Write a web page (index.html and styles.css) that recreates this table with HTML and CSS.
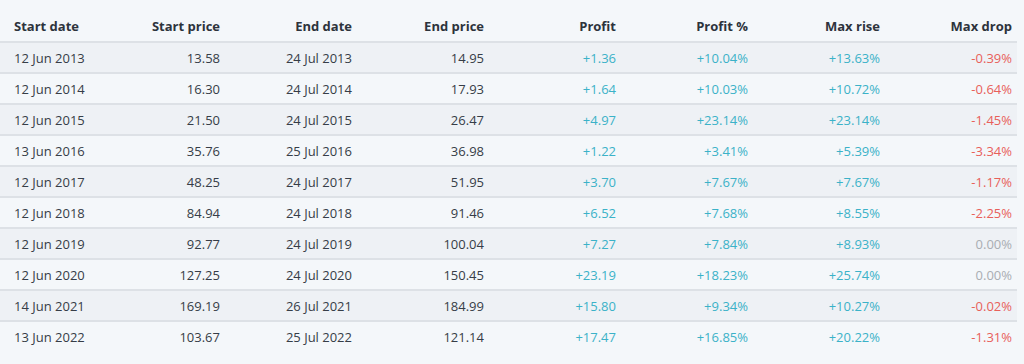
FILE: index.html
```html
<!DOCTYPE html>
<html lang="en">
<head>
  <meta charset="UTF-8">
  <title>Seasonality results</title>
  <link rel="stylesheet" href="styles.css">
</head>
<body>
<div class="results-wrap">
  <table class="results-table">
    <colgroup>
      <col class="col-first">
      <col span="7" class="col-rest">
    </colgroup>
    <thead>
      <tr>
        <th class="left">Start date</th>
        <th>Start price</th>
        <th>End date</th>
        <th>End price</th>
        <th>Profit</th>
        <th>Profit %</th>
        <th>Max rise</th>
        <th>Max drop</th>
      </tr>
    </thead>
    <tbody>
      <tr><td class="left">12 Jun 2013</td><td>13.58</td><td>24 Jul 2013</td><td>14.95</td><td class="up">+1.36</td><td class="up">+10.04%</td><td class="up">+13.63%</td><td class="down">-0.39%</td></tr>
      <tr><td class="left">12 Jun 2014</td><td>16.30</td><td>24 Jul 2014</td><td>17.93</td><td class="up">+1.64</td><td class="up">+10.03%</td><td class="up">+10.72%</td><td class="down">-0.64%</td></tr>
      <tr><td class="left">12 Jun 2015</td><td>21.50</td><td>24 Jul 2015</td><td>26.47</td><td class="up">+4.97</td><td class="up">+23.14%</td><td class="up">+23.14%</td><td class="down">-1.45%</td></tr>
      <tr><td class="left">13 Jun 2016</td><td>35.76</td><td>25 Jul 2016</td><td>36.98</td><td class="up">+1.22</td><td class="up">+3.41%</td><td class="up">+5.39%</td><td class="down">-3.34%</td></tr>
      <tr><td class="left">12 Jun 2017</td><td>48.25</td><td>24 Jul 2017</td><td>51.95</td><td class="up">+3.70</td><td class="up">+7.67%</td><td class="up">+7.67%</td><td class="down">-1.17%</td></tr>
      <tr><td class="left">12 Jun 2018</td><td>84.94</td><td>24 Jul 2018</td><td>91.46</td><td class="up">+6.52</td><td class="up">+7.68%</td><td class="up">+8.55%</td><td class="down">-2.25%</td></tr>
      <tr><td class="left">12 Jun 2019</td><td>92.77</td><td>24 Jul 2019</td><td>100.04</td><td class="up">+7.27</td><td class="up">+7.84%</td><td class="up">+8.93%</td><td class="flat">0.00%</td></tr>
      <tr><td class="left">12 Jun 2020</td><td>127.25</td><td>24 Jul 2020</td><td>150.45</td><td class="up">+23.19</td><td class="up">+18.23%</td><td class="up">+25.74%</td><td class="flat">0.00%</td></tr>
      <tr><td class="left">14 Jun 2021</td><td>169.19</td><td>26 Jul 2021</td><td>184.99</td><td class="up">+15.80</td><td class="up">+9.34%</td><td class="up">+10.27%</td><td class="down">-0.02%</td></tr>
      <tr><td class="left">13 Jun 2022</td><td>103.67</td><td>25 Jul 2022</td><td>121.14</td><td class="up">+17.47</td><td class="up">+16.85%</td><td class="up">+20.22%</td><td class="down">-1.31%</td></tr>
    </tbody>
  </table>
</div>
</body>
</html>
```

FILE: styles.css
```css
:root {
  --page-bg: #f4f7fa;
  --row-alt: #eef1f5;
  --border-color: #dde1e6;
  --text-dark: #363d47;
  --head-text: #2d333c;
  --up-color: #3bb2c8;
  --down-color: #e8605a;
  --flat-color: #a9adb2;
}

* {
  box-sizing: border-box;
  margin: 0;
  padding: 0;
}

body {
  font-family: 'Open Sans', 'Noto Sans', sans-serif;
  font-size: 13px;
  background: var(--page-bg);
  color: var(--text-dark);
}

.results-wrap {
  width: 1017px;
  padding-top: 10px;
}

.results-table {
  width: 100%;
  border-collapse: collapse;
  table-layout: fixed;
}

.col-first {
  width: 93px;
}

.col-rest {
  width: 132px;
}

.results-table th,
.results-table td {
  text-align: right;
  padding: 0 5px 0 14px;
  white-space: nowrap;
}

.results-table th {
  height: 32px;
  font-weight: 700;
  color: var(--head-text);
  border-bottom: 2px solid var(--border-color);
}

.results-table td {
  height: 31px;
  border-bottom: 2px solid var(--border-color);
}

.results-table tbody tr:nth-child(odd) {
  background: var(--row-alt);
}

.results-table tbody tr:last-child td {
  border-bottom: none;
}

.results-table .left {
  text-align: left;
}

.up {
  color: var(--up-color);
}

.down {
  color: var(--down-color);
}

.flat {
  color: var(--flat-color);
}
```
